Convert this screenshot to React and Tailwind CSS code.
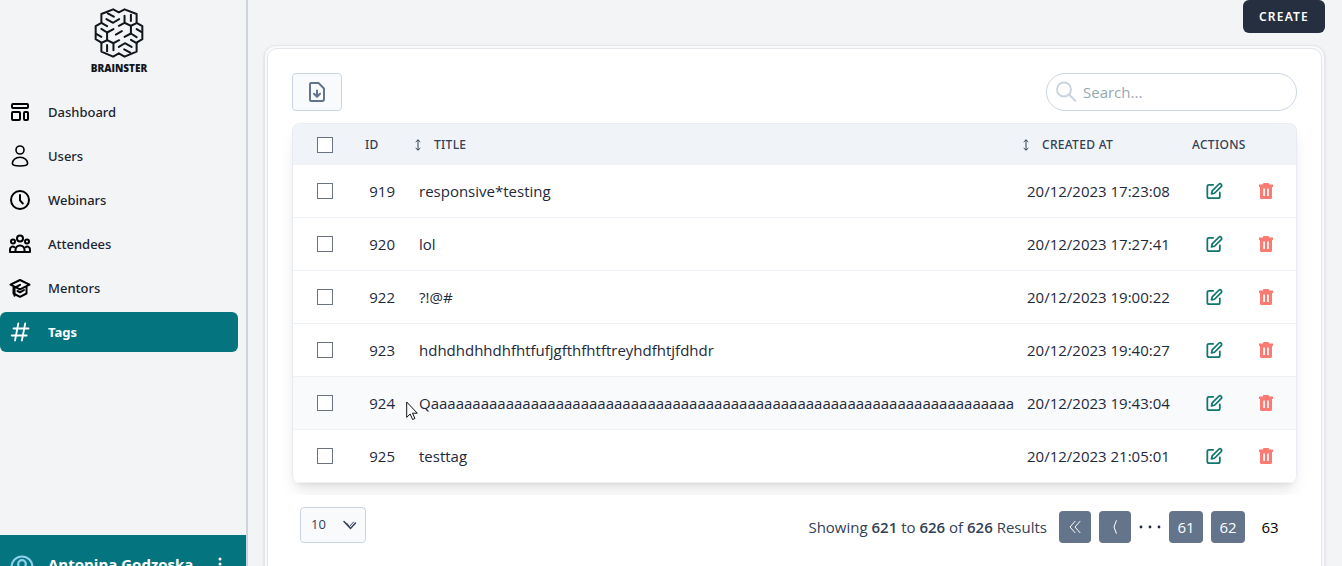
import React from "react";

const TAGS = [
  { id: 919, title: "responsive*testing", created: "20/12/2023 17:23:08" },
  { id: 920, title: "lol", created: "20/12/2023 17:27:41" },
  { id: 922, title: "?!@#", created: "20/12/2023 19:00:22" },
  { id: 923, title: "hdhdhdhhdhfhtfufjgfthfhtftreyhdfhtjfdhdr", created: "20/12/2023 19:40:27" },
  { id: 924, title: "Q" + "a".repeat(70), created: "20/12/2023 19:43:04", hovered: true },
  { id: 925, title: "testtag", created: "20/12/2023 21:05:01" },
];

function Logo() {
  const half = (
    <>
      <path d="M322 38l18 10" />
      <path d="M318 55l20 11 18-11" />
      <path d="M303 66l17 10" />
      <path d="M303 84l17 11 19-10" />
      <path d="M320 95v23l-17 8" />
      <path d="M303 108l-14-8" />
      <path d="M320 118l19 9v21M339 127l17-9" />
      <path d="M320 132v19" />
    </>
  );
  return (
    <svg className="h-[50px] w-[50px]" viewBox="281 22 149 149" fill="none" stroke="#12161c" strokeWidth="6" strokeLinecap="round" strokeLinejoin="round" aria-hidden="true">
      <path d="M303 40l35-14 17 9 17-9 36 14v26l17 10v39l-17 10v27l-36 15-17-10-17 10-35-15v-27l-17-10V76l17-10z" />
      {half}
      <g transform="rotate(180 355.5 96.5)">{half}</g>
      <path d="M346 101l18-10" />
    </svg>
  );
}

function Icon({ children, className = "size-6", stroke = 2 }) {
  return (
    <svg className={className} viewBox="0 0 24 24" fill="none" stroke="currentColor" strokeWidth={stroke} strokeLinecap="round" strokeLinejoin="round" aria-hidden="true">
      {children}
    </svg>
  );
}

const NAV = [
  {
    label: "Dashboard",
    icon: (
      <Icon>
        <rect x="4" y="4" width="16" height="4" rx="1" />
        <rect x="4" y="12" width="8" height="8" rx="1" />
        <rect x="16" y="12" width="4" height="8" rx="1" />
      </Icon>
    ),
  },
  {
    label: "Users",
    icon: (
      <Icon stroke={1.6}>
        <circle cx="12" cy="6" r="4" />
        <path d="M4.4 19.5c0-3.6 3.2-6.2 7.6-6.2s7.6 2.6 7.6 6.2c0 1.7-3.4 2.5-7.6 2.5s-7.6-.8-7.6-2.5z" />
      </Icon>
    ),
  },
  {
    label: "Webinars",
    icon: (
      <Icon stroke={2}>
        <circle cx="12" cy="12" r="9" />
        <path d="M12 7v5.3l2.8 3.2" />
      </Icon>
    ),
  },
  {
    label: "Attendees",
    icon: (
      <Icon>
        <circle cx="12" cy="6.5" r="3" />
        <circle cx="5" cy="9.5" r="2" />
        <circle cx="19" cy="9.5" r="2" />
        <path d="M7.5 20v-2a4.5 4.5 0 0 1 9 0v2z" />
        <path d="M7.5 20H2v-2.5a2.8 2.8 0 0 1 4.5-2.3M16.500 20H22v-2.5a2.8 2.8 0 0 0-4.5-2.3" />
      </Icon>
    ),
  },
  {
    label: "Mentors",
    icon: (
      <Icon stroke={2}>
        <path d="M12 4l9.500 4.700-9.500 4.700-9.500-4.700z" />
        <path d="M12 8.800l-5.500 3v8" />
        <path d="M5.500 11v6.500l6.500 3.300 6.500-3.300v-6.500" />
        <path d="M9.500 15l2.500 1.300 4-2.300" />
      </Icon>
    ),
  },
  {
    label: "Tags",
    active: true,
    icon: (
      <Icon stroke={1.8}>
        <path d="M5.500 8.500H20.500M3.700 15.500H18.700M10.300 3.500L7 20.500M17.200 3.500l-3.300 17" />
      </Icon>
    ),
  },
];

function Sidebar() {
  return (
    <aside className="flex h-screen w-[248px] shrink-0 flex-col overflow-hidden border-r-2 border-[#cdd4db]">
      <div className="flex flex-col items-center pt-2 pr-2">
        <Logo />
        <span className="mt-1 text-[10px] leading-3 font-extrabold text-[#12161c]">BRAINSTER</span>
      </div>
      <nav className="mt-4 flex flex-1 flex-col gap-1 pt-0.5 pr-2 font-[Noto_Sans,sans-serif]">
        {NAV.map((n) => (
          <a
            key={n.label}
            href={"#" + n.label.toLowerCase()}
            aria-current={n.active ? "page" : undefined}
            className={
              n.active
                ? "flex h-10 items-center gap-4 rounded-md bg-[#04747f] pl-2 text-[13px] font-bold text-white"
                : "flex h-10 items-center gap-4 rounded-md pl-2 text-[13px] font-medium text-black"
            }
          >
            {n.icon}
            <span className={n.active ? "pt-0.5" : "pt-0.5 text-[#1c2530]"}>{n.label}</span>
          </a>
        ))}
      </nav>
      <div className="-mb-8 flex h-[63px] shrink-0 items-center bg-[#04747f] pr-3.5 pl-2.5 text-white">
        <Icon className="size-6 text-[#8fd0ee]" stroke={2.2}>
          <circle cx="12" cy="12" r="10.5" />
          <circle cx="12" cy="9" r="3.8" />
          <path d="M5 19.500c1.500-3 4-4.500 7-4.500s5.500 1.500 7 4.500" />
        </Icon>
        <span className="ml-3.5 flex-1 pb-1 text-[15px] font-bold whitespace-nowrap">Antonina Godzoska</span>
        <button type="button" aria-label="Account menu">
          <svg className="size-6" viewBox="0 0 24 24" fill="currentColor" aria-hidden="true">
            <circle cx="12" cy="4" r="1.500" />
            <circle cx="12" cy="9" r="1.500" />
            <circle cx="12" cy="14" r="1.500" />
          </svg>
        </button>
      </div>
    </aside>
  );
}

function SortArrow() {
  return (
    <svg className="h-3 w-2 text-[#334155]" viewBox="0 0 8 12" fill="none" stroke="currentColor" strokeWidth="1" aria-hidden="true">
      <path d="M4 .8v10.400M1.700 3L4 .8 6.300 3M1.700 9L4 11.200 6.300 9" />
    </svg>
  );
}

function Check({ label }) {
  return (
    <input
      type="checkbox"
      aria-label={label}
      className="block size-4 appearance-none border border-[#6b7280] bg-white checked:bg-[#04747f]"
    />
  );
}

function TagTable() {
  return (
    <div className="-mx-6 overflow-hidden px-6 pt-3 pb-3">
      <div className="overflow-hidden rounded-lg border border-b-0 border-[#e6ecf2] shadow-lg">
        <table className="w-full table-fixed border-separate border-spacing-0 text-left">
          <thead className="font-[Noto_Sans,sans-serif]">
            <tr className="h-[41px] bg-[#f0f4f8] text-xs tracking-wide text-[#334155]">
              <th className="w-16 pl-6"><Check label="Select all" /></th>
              <th className="w-[50px] pl-2 font-medium">ID</th>
              <th className="pl-[7px] font-medium">
                <button type="button" className="flex items-center gap-3 font-medium tracking-wide"><SortArrow />TITLE</button>
              </th>
              <th className="w-[169px] pl-[7px] font-medium">
                <button type="button" className="flex items-center gap-3 font-medium tracking-wide"><SortArrow />CREATED AT</button>
              </th>
              <th className="w-28 pl-2 font-medium">ACTIONS</th>
            </tr>
          </thead>
          <tbody>
            {TAGS.map((t) => (
              <tr
                key={t.id}
                className={
                  t.hovered
                    ? "h-[53px] bg-[#f8fafc] text-[15px] text-[#1e293b] *:border-b *:border-[#eef1f5]"
                    : "h-[53px] bg-white text-[15px] text-[#1e293b] *:border-b *:border-[#eef1f5]"
                }
              >
                <td className="pl-6"><Check label={"Select " + t.id} /></td>
                <td className="pr-3 text-right">{t.id}</td>
                <td className="pl-3 whitespace-nowrap">{t.title}</td>
                <td className="pl-3 whitespace-nowrap">{t.created}</td>
                <td className="pl-5">
                  <div className="flex items-center gap-8">
                    <button type="button" aria-label={"Edit " + t.id} className="text-[#0f766e]">
                      <Icon className="size-5" stroke={2.1}>
                        <path d="M11 4.500H6a2 2 0 0 0-2 2v12a2 2 0 0 0 2 2h11a2 2 0 0 0 2-2V13.500" />
                        <path d="M9 15.500l.8-3.600 8-8a1.900 1.900 0 0 1 2.800 2.800l-8 8z" />
                      </Icon>
                    </button>
                    <button type="button" aria-label={"Delete " + t.id} className="text-[#fb7a72]">
                      <svg className="size-5" viewBox="0 0 20 20" fill="currentColor" fillRule="evenodd" aria-hidden="true">
                        <path d="M7.500 2h5l.8 1.500H17V6H3V3.500h3.700zM4 6h12v10.500a1.500 1.500 0 0 1-1.500 1.500h-9A1.500 1.500 0 0 1 4 16.500zM7.200 7.500v7.500h1.700V7.500zm3.900 0v7.500h1.700V7.500z" />
                      </svg>
                    </button>
                  </div>
                </td>
              </tr>
            ))}
          </tbody>
        </table>
      </div>
    </div>
  );
}

function Footer() {
  const page = "flex h-8 items-center justify-center rounded bg-[#64748b] text-white";
  return (
    <div className="flex items-start justify-between pr-2.5 pl-2">
      <div className="relative mt-3 text-[#334155]">
        <select
          aria-label="Rows per page"
          defaultValue="10"
          className="h-9 w-[66px] appearance-none rounded border border-[#cbd5e1] bg-[#f8fafc] pl-2.5 text-[13px]"
        >
          <option>10</option>
          <option>25</option>
          <option>50</option>
        </select>
        <svg className="pointer-events-none absolute top-3 right-2 h-3 w-4" viewBox="0 0 16 12" fill="none" stroke="currentColor" aria-hidden="true">
          <path d="M2 2.500l6.500 7 5-5.500" strokeWidth="1.500" strokeLinecap="round" />
          <path d="M4.500 4l3 3.500L11.500 3" strokeWidth="1" strokeLinecap="round" />
        </svg>
      </div>
      <div className="mt-4 flex items-center gap-2 text-[15px]">
        <p className="mr-1 text-[#334155]">
          Showing <b className="font-semibold">621</b> to <b className="font-semibold">626</b> of <b className="font-semibold">626</b> Results
        </p>
        <button type="button" aria-label="First page" className={page + " w-8"}>
          <Icon className="size-4" stroke={1.5}><path d="M12 3.500L4.500 12l7.500 8.500M19.500 3.500L12 12l7.500 8.500" /></Icon>
        </button>
        <button type="button" aria-label="Previous page" className={page + " w-8"}>
          <Icon className="size-4" stroke={1.5}><path d="M14 2.500L10.500 12l3.500 9.500" /></Icon>
        </button>
        <svg className="h-2 w-[22px] text-[#1e293b]" viewBox="0 0 22 8" fill="currentColor" role="img" aria-label="More pages">
          <circle cx="2" cy="4" r="1.400" />
          <circle cx="11" cy="4" r="1.400" />
          <circle cx="20" cy="4" r="1.400" />
        </svg>
        <button type="button" className={page + " w-[34px]"}>61</button>
        <button type="button" className={page + " w-[34px]"}>62</button>
        <button type="button" aria-current="page" className="flex h-8 w-[34px] items-center justify-center rounded text-black">63</button>
      </div>
    </div>
  );
}

export default function App() {
  return (
    <div className="flex h-screen overflow-hidden bg-[#f3f4f6] font-[Open_Sans,Noto_Sans,sans-serif]">
      <Sidebar />
      <main className="flex min-w-0 flex-1 flex-col pr-[17px] pl-4">
        <button type="button" className="h-[33px] shrink-0 self-end rounded-md bg-[#252f3f] px-4 font-[Noto_Sans,sans-serif] text-xs font-semibold tracking-widest text-white">
          CREATE
        </button>
        <div className="mt-3 min-h-screen rounded-xl border border-[#e5e7eb] bg-[#f9fafb] p-0.5 shadow-sm">
          <div className="min-h-screen rounded-[10px] border border-[#e2e5ea] bg-white p-6">
            <div className="flex items-center justify-between">
              <button type="button" aria-label="Export" className="flex h-[38px] w-[50px] items-center justify-center rounded border border-[#cbd5e1] bg-[#f8fafc] text-[#64748b]">
                <Icon>
                  <path d="M6 3h7.500L19 8.500V19a2 2 0 0 1-2 2H6a1 1 0 0 1-1-1V4a1 1 0 0 1 1-1z" />
                  <path d="M12 10.500v6M9 13.800l3 3 3-3" />
                </Icon>
              </button>
              <label className="flex h-[38px] w-[251px] items-center rounded-full border border-[#cbd5e1] bg-white pr-4 pl-2">
                <Icon className="size-6 shrink-0 text-[#cbd5e1]"><circle cx="9" cy="9.5" r="7" /><path d="M14.300 14.800l6 6" /></Icon>
                <input type="text" aria-label="Search" placeholder="Search..." className="ml-1 w-full min-w-0 bg-transparent text-[15px] text-[#334155] outline-none placeholder:text-[#94a9ae]" />
              </label>
            </div>
            <TagTable />
            <Footer />
          </div>
        </div>
      </main>
      <svg className="pointer-events-none absolute top-[401px] left-[406px] h-5 w-3" viewBox="0 0 12 20" aria-hidden="true">
        <path d="M.7 1v15.300l3.500-3.300 2.400 5.500 2.300-1-2.400-5.300h4.800z" fill="#fff" stroke="#111" strokeWidth="1" />
      </svg>
    </div>
  );
}
